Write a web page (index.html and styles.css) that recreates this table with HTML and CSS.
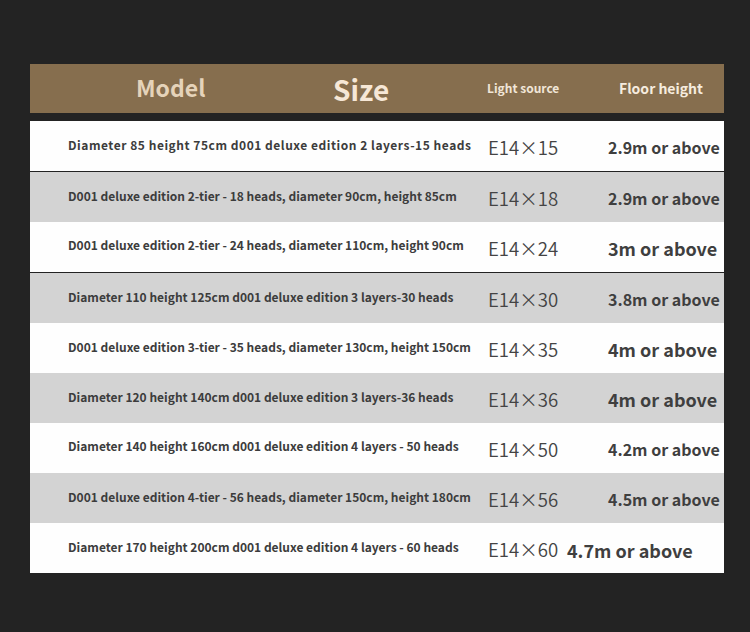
FILE: index.html
```html
<!DOCTYPE html>
<html>
<head>
<meta charset="utf-8">
<link rel="stylesheet" href="styles.css">
</head>
<body>
<div class="panel">
  <div class="head">
    <div class="h-model">Model</div>
    <div class="h-size">Size</div>
    <div class="h-light">Light source</div>
    <div class="h-floor">Floor height</div>
  </div>
  <div class="rows">
    <div class="row white">
      <div class="desc wide">Diameter 85 height 75cm d001 deluxe edition 2 layers-15 heads</div>
      <div class="src">E14×15</div>
      <div class="floor f16">2.9m or above</div>
    </div>
    <div class="row gray sep">
      <div class="desc">D001 deluxe edition 2-tier - 18 heads, diameter 90cm, height 85cm</div>
      <div class="src">E14×18</div>
      <div class="floor f16">2.9m or above</div>
    </div>
    <div class="row white">
      <div class="desc up">D001 deluxe edition 2-tier - 24 heads, diameter 110cm, height 90cm</div>
      <div class="src">E14×24</div>
      <div class="floor f18">3m or above</div>
    </div>
    <div class="row gray sep">
      <div class="desc">Diameter 110 height 125cm d001 deluxe edition 3 layers-30 heads</div>
      <div class="src">E14×30</div>
      <div class="floor f16">3.8m or above</div>
    </div>
    <div class="row white">
      <div class="desc">D001 deluxe edition 3-tier - 35 heads, diameter 130cm, height 150cm</div>
      <div class="src">E14×35</div>
      <div class="floor f18">4m or above</div>
    </div>
    <div class="row gray">
      <div class="desc">Diameter 120 height 140cm d001 deluxe edition 3 layers-36 heads</div>
      <div class="src">E14×36</div>
      <div class="floor f18">4m or above</div>
    </div>
    <div class="row white">
      <div class="desc up">Diameter 140 height 160cm d001 deluxe edition 4 layers - 50 heads</div>
      <div class="src">E14×50</div>
      <div class="floor f16">4.2m or above</div>
    </div>
    <div class="row gray">
      <div class="desc">D001 deluxe edition 4-tier - 56 heads, diameter 150cm, height 180cm</div>
      <div class="src">E14×56</div>
      <div class="floor f16">4.5m or above</div>
    </div>
    <div class="row white last">
      <div class="desc">Diameter 170 height 200cm d001 deluxe edition 4 layers - 60 heads</div>
      <div class="src">E14×60</div>
      <div class="floor f18">4.7m or above</div>
    </div>
  </div>
</div>
</body>
</html>
```
FILE: styles.css
```css
html, body {
  margin: 0;
  padding: 0;
  background: #232323;
}
body {
  width: 750px;
  height: 632px;
  overflow: hidden;
  font-family: "Noto Sans CJK SC", "Noto Sans", sans-serif;
}
.panel {
  margin: 64px 0 0 30px;
  width: 694px;
}
.head {
  height: 49px;
  background: #866e4e;
  display: flex;
  align-items: center;
  font-weight: 700;
}
.h-model {
  margin-left: 106px;
  margin-top: -4px;
  font-size: 23px;
  color: #e5d3ba;
  width: 197px;
}
.h-size {
  font-size: 28px;
  color: #f6e7d6;
  width: 154px;
  margin-top: 1px;
}
.h-light {
  font-size: 12px;
  color: #f1e6d8;
  width: 132px;
  margin-top: -2px;
}
.h-floor {
  font-size: 14px;
  color: #f6ecdf;
  margin-top: -2px;
}
.rows {
  margin-top: 8px;
}
.row {
  height: 50px;
  display: grid;
  grid-template-columns: 458px 120px 1fr;
  align-items: center;
  color: #3c3c3c;
}
.row.white { background: #fefefe; }
.row.gray { background: #d3d3d3; }
.row.sep { border-top: 1px solid #222; }
.desc {
  padding-left: 38px;
  font-size: 12px;
  font-weight: 700;
  white-space: nowrap;
  margin-top: -3px;
}
.desc.wide { letter-spacing: 0.53px; }
.desc.up { margin-top: -5px; }
.src {
  font-size: 18.6px;
  font-weight: 350;
  color: #444;
  white-space: nowrap;
}
.floor {
  font-weight: 700;
  text-align: right;
  padding-right: 5px;
  white-space: nowrap;
  color: #3f3f3f;
  padding-top: 1px;
}
.f16 { font-size: 16px; }
.f18 { font-size: 18px; padding-right: 7px; }
.row.last { grid-template-columns: 458px 79px 1fr; }
.row.last .floor { text-align: left; padding-right: 0; padding-top: 4px; }
```
